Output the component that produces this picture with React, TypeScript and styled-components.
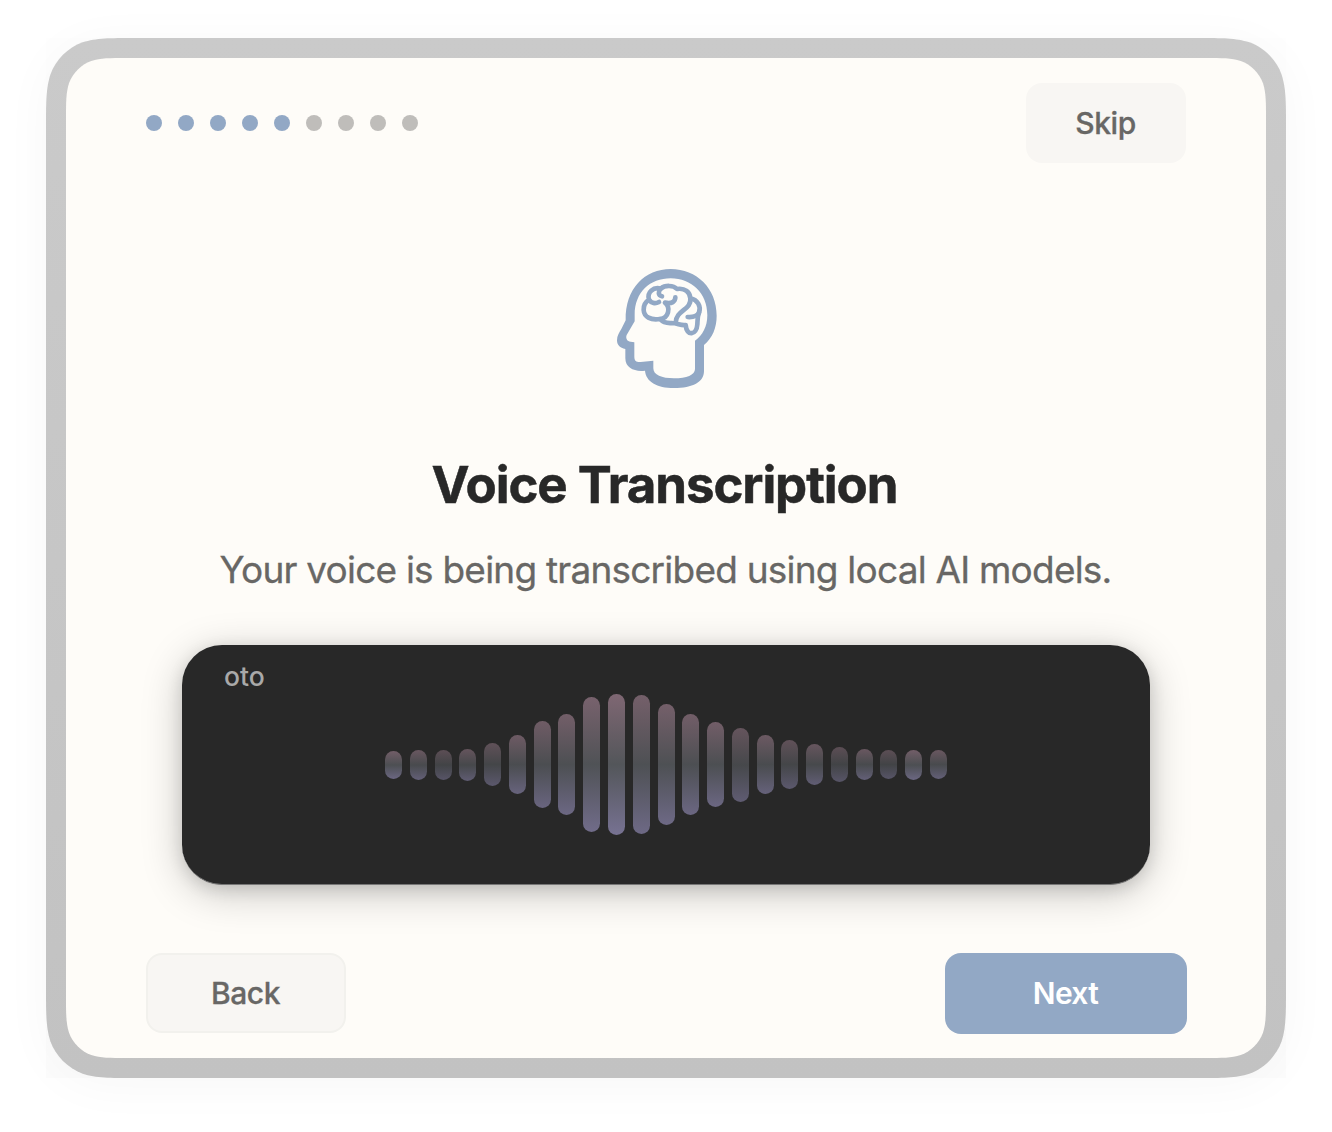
import React from 'react';
import styled, { createGlobalStyle } from 'styled-components';

const BLUE = '#92a8c5';

/* Closed outline of a rectangle with continuous (smoothed) corners. */
const smoothRect = (w: number, h: number, r: number) => {
  const a = 1.528665 * r;
  const b = 1.088493 * r;
  const c = 0.868407 * r;
  const d = 0.631494 * r;
  const e = 0.074911 * r;
  const f = 0.372824 * r;
  const g = 0.16906 * r;
  return [
    `M${a} 0L${w - a} 0`,
    `C${w - b} 0 ${w - c} 0 ${w - d} ${e}C${w - f} ${g} ${w - g} ${f} ${w - e} ${d}C${w} ${c} ${w} ${b} ${w} ${a}`,
    `L${w} ${h - a}`,
    `C${w} ${h - b} ${w} ${h - c} ${w - e} ${h - d}C${w - g} ${h - f} ${w - f} ${h - g} ${w - d} ${h - e}C${w - c} ${h} ${w - b} ${h} ${w - a} ${h}`,
    `L${a} ${h}`,
    `C${b} ${h} ${c} ${h} ${d} ${h - e}C${f} ${h - g} ${g} ${h - f} ${e} ${h - d}C0 ${h - c} 0 ${h - b} 0 ${h - a}`,
    `L0 ${a}`,
    `C0 ${b} 0 ${c} ${e} ${d}C${g} ${f} ${f} ${g} ${d} ${e}C${c} 0 ${b} 0 ${a} 0Z`,
  ].join('');
};

const GlobalStyle = createGlobalStyle`
  * { box-sizing: border-box; }
  body {
    margin: 0;
    background: #fff;
    font-family: Inter, 'Liberation Sans', sans-serif;
    overflow: hidden;
  }
`;

const Page = styled.main`
  width: 1332px;
  height: 1132px;
  padding: 38px 46px;
`;

const Backdrop = styled.div`
  width: 1240px;
  height: 1040px;
  background: linear-gradient(rgba(0, 0, 0, 0.002), rgba(0, 0, 0, 0.01));
`;

const Shadow = styled.div`
  width: 1240px;
  height: 1040px;
  border-radius: 60px;
  box-shadow: 0 6px 50px rgba(0, 0, 0, 0.035);
`;

const Frame = styled.div`
  width: 1240px;
  height: 1040px;
  padding: 20px;
  background: linear-gradient(#cacaca, #c6c6c6 50%, #c2c2c2);
  clip-path: path('${smoothRect(1240, 1040, 58)}');
`;

const Window = styled.section`
  width: 1200px;
  height: 1000px;
  padding: 25px 79px 25px 80px;
  display: flex;
  flex-direction: column;
  background: #fefcf8;
  clip-path: path('${smoothRect(1200, 1000, 40)}');
`;

const Header = styled.header`
  display: flex;
  justify-content: space-between;
  align-items: center;
  height: 80px;
  padding-right: 1px;
`;

const Dots = styled.div`
  display: flex;
  gap: 16px;
`;

const Dot = styled.span<{ $active: boolean }>`
  width: 16px;
  height: 16px;
  border-radius: 50%;
  background: ${(p) => (p.$active ? BLUE : '#bfbdba')};
`;

const Button = styled.button<{ $kind: 'plain' | 'outline' | 'primary' }>`
  width: ${(p) => ({ plain: 160, outline: 200, primary: 242 })[p.$kind]}px;
  height: ${(p) => (p.$kind === 'primary' ? 81 : 80)}px;
  padding: ${(p) => (p.$kind === 'primary' ? '0 1px 2px 0' : '0 1px 0 0')};
  border: ${(p) => (p.$kind === 'outline' ? '2px solid #f2f1ed' : '0')};
  border-radius: 16px;
  background: ${(p) => (p.$kind === 'primary' ? BLUE : '#f8f6f3')};
  color: ${(p) => (p.$kind === 'primary' ? '#fff' : '#686765')};
  font: ${(p) => (p.$kind === 'primary' ? 600 : 500)} 30px/36px Inter, sans-serif;
  letter-spacing: ${(p) => (p.$kind === 'primary' ? -0.65 : -0.45)}px;
  -webkit-text-stroke: ${(p) => (p.$kind === 'primary' ? 0 : 0.3)}px currentColor;
`;

const Body = styled.div`
  flex: 1;
  display: flex;
  flex-direction: column;
  align-items: center;
  padding-right: 1px;
`;

const HeadIcon = styled.svg`
  width: 132px;
  height: 145px;
  margin-top: 92px;
`;

const Title = styled.h1`
  margin: 53px 0 0;
  padding-right: 3px;
  font-size: 51px;
  line-height: 64px;
  font-weight: 700;
  letter-spacing: -1.08px;
  -webkit-text-stroke: 0.5px currentColor;
  color: #282828;
  white-space: nowrap;
`;

const Subtitle = styled.p`
  margin: 30px 0 0;
  padding-right: 1px;
  font-size: 37px;
  line-height: 46px;
  font-weight: 400;
  letter-spacing: -0.78px;
  -webkit-text-stroke: 0.3px currentColor;
  color: #686765;
  white-space: nowrap;
`;

const Recorder = styled.div`
  flex: none;
  width: 968px;
  height: 240px;
  margin-top: 52px;
  border-radius: 40px;
  border-bottom: 1px solid #777;
  background: #282828;
  box-shadow: 0 8px 40px rgba(0, 0, 0, 0.22), 0 4px 16px rgba(0, 0, 0, 0.12);
`;

const AppName = styled.div`
  height: 32px;
  margin: 15px 0 0 42px;
  font-size: 26.5px;
  line-height: 32px;
  font-weight: 500;
  color: #a9a9a9;
`;

const Wave = styled.div`
  display: flex;
  justify-content: center;
  align-items: center;
  gap: 7.77px;
  height: 145px;
`;

const Bar = styled.span`
  width: 17px;
  border-radius: 8.5px;
  background: linear-gradient(#7f6773, #53565a 50%, #777292);
`;

const Footer = styled.footer`
  display: flex;
  justify-content: space-between;
  align-items: flex-start;
  height: 80px;
`;

const BARS: [number, number][] = [
  [28, 0.85], [30, 0.75], [30, 0.6], [32, 0.7], [43, 0.65], [59, 0.8], [87, 0.82], [101, 0.86],
  [135, 0.92], [141, 1], [139, 0.88], [121, 0.88], [101, 0.85], [85, 0.85], [74, 0.7],
  [59, 0.78], [49, 0.65], [41, 0.72], [35, 0.6], [31, 0.75], [29, 0.6], [30, 0.85], [29, 0.75],
];

export default function App() {
  return (
    <>
      <GlobalStyle />
      <Page>
        <Backdrop>
          <Shadow>
            <Frame>
              <Window>
                <Header>
                  <Dots>
                    {Array.from({ length: 9 }, (_, i) => (
                      <Dot key={i} $active={i < 5} />
                    ))}
                  </Dots>
                  <Button $kind="plain">Skip</Button>
                </Header>
                <Body>
                  <HeadIcon viewBox="0 0 396 435" fill="none">
                    <path
                      fill={BLUE}
                      fillRule="evenodd"
                      d="M212 42C290 42 350 100 350 182C350 218 338 248 312 270L312 348C312 382 278 399 222 399C170 399 138 380 135 347C105 351 76 340 76 310L76 282C60 279 51 270 51 256C51 242 58 232 64 222L77 196C75 100 135 42 212 42ZM212 70C150 70 104 112 104 180L104 199L80 240C76 250 82 260 92 260L103 262L103 305C103 318 110 322 122 321L160 317L160 340C160 360 185 370 222 370C260 370 285 360 285 342L285 257C308 240 322 215 322 180C322 115 275 70 212 70Z"
                    />
                    <g stroke={BLUE} strokeWidth="14" strokeLinecap="round" strokeLinejoin="round">
                      <path d="M147 134C140 112 160 95 182 101C195 90 220 90 231 102C255 98 270 112 271 130C293 135 304 153 297 173C292 184 293 195 292 208C290 240 260 246 257 210C245 213 233 205 215 204C200 205 188 201 180 192C152 197 132 185 131 165C130 150 136 141 147 134" />
                      <path d="M182 101C174 110 174 121 186 124M147 134C154 145 166 147 177 141M195 143C216 147 226 140 226 127M195 143C213 158 206 190 180 192M271 130C275 165 228 165 227 203M297 173C290 185 278 187 263 186" />
                    </g>
                  </HeadIcon>
                  <Title>Voice Transcription</Title>
                  <Subtitle>Your voice is being transcribed using local AI models.</Subtitle>
                  <Recorder>
                    <AppName>oto</AppName>
                    <Wave>
                      {BARS.map(([height, opacity], i) => (
                        <Bar key={i} style={{ height, opacity }} />
                      ))}
                    </Wave>
                  </Recorder>
                </Body>
                <Footer>
                  <Button $kind="outline">Back</Button>
                  <Button $kind="primary">Next</Button>
                </Footer>
              </Window>
            </Frame>
          </Shadow>
        </Backdrop>
      </Page>
    </>
  );
}
